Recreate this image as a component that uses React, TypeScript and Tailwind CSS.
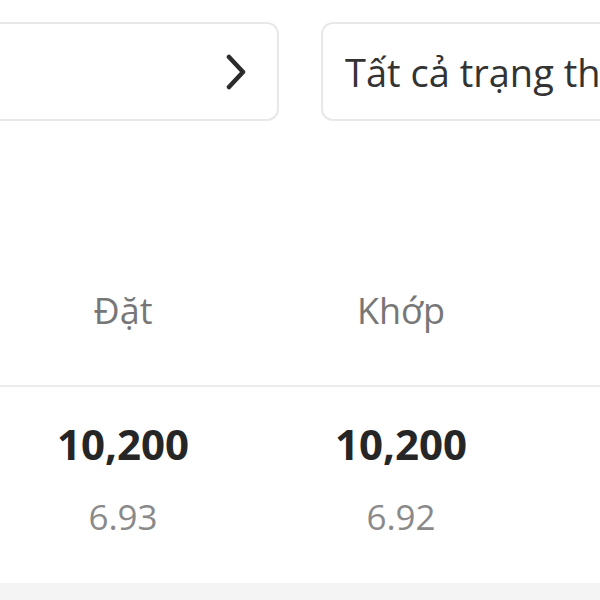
export default function App() {
  return (
    <div className="w-[600px] h-[600px] overflow-hidden bg-white relative" style={{ fontFamily: '"Open Sans", "Noto Sans", sans-serif' }}>
      {/* filter row */}
      <div className="flex pt-[22px]">
        <div className="shrink-0 ml-[-40px] w-[319px] h-[99px] rounded-[12px] border-2 border-[#e8e8e8] flex items-center justify-end pr-[30px]">
          <svg width="22" height="36" viewBox="0 0 22 36" fill="none">
            <polyline points="4,3 18,18 4,33" stroke="#2b2b2b" strokeWidth="4.5" strokeLinecap="round" strokeLinejoin="round" />
          </svg>
        </div>
        <div className="shrink-0 ml-[42px] w-[320px] h-[99px] rounded-[12px] border-2 border-[#e8e8e8] flex items-center pl-[22px] overflow-hidden whitespace-nowrap">
          <span className="text-[38px] leading-none text-[#333]">Tất cả trạng thái</span>
        </div>
      </div>

      {/* column headers */}
      <div className="flex ml-[-16px] pt-[172px] h-[264px]">
        <div className="w-[278px] shrink-0 text-center text-[36px] leading-none text-[#777]">Đặt</div>
        <div className="w-[278px] shrink-0 text-center text-[36px] leading-none text-[#777]">Khớp</div>
      </div>

      <div className="h-[2px] bg-[#ececec]" />

      {/* values */}
      <div className="flex ml-[-16px] pt-[36px] h-[196px]">
        <div className="w-[278px] shrink-0 text-center">
          <div className="text-[42px] leading-none font-bold text-[#262626]">10,200</div>
          <div className="mt-[34px] text-[35px] leading-none text-[#8a8a8a]">6.93</div>
        </div>
        <div className="w-[278px] shrink-0 text-center">
          <div className="text-[42px] leading-none font-bold text-[#262626]">10,200</div>
          <div className="mt-[34px] text-[35px] leading-none text-[#8a8a8a]">6.92</div>
        </div>
      </div>

      <div className="h-[40px] bg-[#f4f4f4]" />
    </div>
  )
}
